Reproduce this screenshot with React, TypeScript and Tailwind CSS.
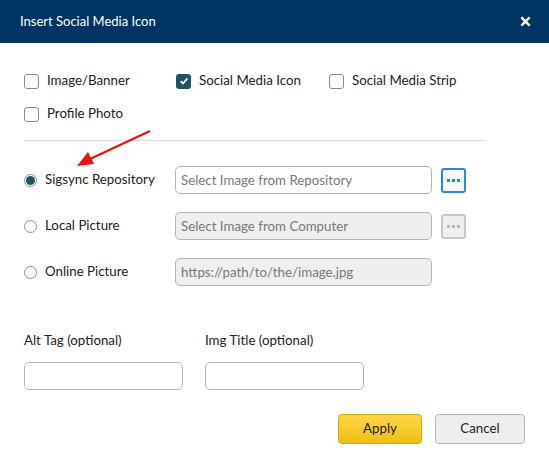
import { useState } from "react";

const types = ["Image/Banner", "Social Media Icon", "Social Media Strip", "Profile Photo"];

const sources = [
  { label: "Sigsync Repository", placeholder: "Select Image from Repository", enabled: true, browse: true },
  { label: "Local Picture", placeholder: "Select Image from Computer", enabled: false, browse: true },
  { label: "Online Picture", placeholder: "https://path/to/the/image.jpg", enabled: false, browse: false },
];

function Checkbox({ checked }: { checked: boolean }) {
  return checked ? (
    <span className="grid h-[15px] w-[15px] place-items-center rounded-[3px] bg-[#1d545e]">
      <svg viewBox="0 0 12 12" className="h-[10px] w-[10px]">
        <path d="M2 6.3 L4.8 9 L10 3" fill="none" stroke="white" strokeWidth="2.2" />
      </svg>
    </span>
  ) : (
    <span className="h-[15px] w-[15px] rounded-[3px] border border-[#8a8a8a] bg-white" />
  );
}

function Radio({ checked }: { checked: boolean }) {
  return (
    <span className="grid h-[13px] w-[13px] place-items-center rounded-full border border-[#8f8f8f] bg-white">
      {checked ? <span className="h-[9px] w-[9px] rounded-full bg-[#1d545e]" /> : null}
    </span>
  );
}

function Dots({ active }: { active: boolean }) {
  const dot = active ? "bg-[#2a86d6]" : "bg-[#b8b8b8]";
  return (
    <button
      type="button"
      className={`flex h-[25px] w-[25px] items-center justify-center gap-[2px] rounded-[3px] border-2 ${
        active ? "border-[#2d88d8] bg-[#f4f6f8]" : "border-[#c8c8c8] bg-[#efefef]"
      }`}
    >
      <span className={`h-[3px] w-[3px] ${dot}`} />
      <span className={`h-[3px] w-[3px] ${dot}`} />
      <span className={`h-[3px] w-[3px] ${dot}`} />
    </button>
  );
}

export default function App() {
  const [source] = useState(0);

  return (
    <div className="relative h-[470px] w-[549px] bg-white font-['Lato','Open_Sans',sans-serif] text-[13.3px] text-[#222]">
      <header className="flex h-[43px] items-center justify-between bg-[#003462] pl-[20px] pr-[18px]">
        <h1 className="text-[13px] text-white">Insert Social Media Icon</h1>
        <svg viewBox="0 0 12 12" className="h-[11px] w-[11px]">
          <path d="M1.5 1.5 L10.5 10.5 M10.5 1.5 L1.5 10.5" stroke="white" strokeWidth="2.6" />
        </svg>
      </header>

      <div className="px-[24px] pt-[29px]">
        <div className="grid grid-cols-[152px_153px_1fr] gap-y-[15px]">
          {types.map((t) => (
            <label key={t} className="flex h-[18px] items-center gap-[8px]">
              <Checkbox checked={t === "Social Media Icon"} />
              <span>{t}</span>
            </label>
          ))}
        </div>

        <div className="mt-[17px] w-[461px] border-t border-[#dcdcdc]" />

        <div className="mt-[25px] flex flex-col gap-[18px]">
          {sources.map((s, i) => (
            <div key={s.label} className="flex items-center">
              <label className="flex w-[151px] items-center gap-[8px]">
                <Radio checked={i === source} />
                <span>{s.label}</span>
              </label>
              <input
                disabled={!s.enabled}
                placeholder={s.placeholder}
                className={`h-[28px] w-[257px] rounded-[5px] border border-[#b4b4b4] px-[5px] text-[13.3px] placeholder:text-[#777] outline-none ${
                  s.enabled ? "bg-white" : "bg-[#efefef]"
                }`}
              />
              {s.browse ? (
                <div className="ml-[9px]">
                  <Dots active={s.enabled} />
                </div>
              ) : null}
            </div>
          ))}
        </div>

        <div className="mt-[45px] flex gap-[22px]">
          <div className="flex flex-col gap-[11px]">
            <span>Alt Tag (optional)</span>
            <input className="h-[28px] w-[159px] rounded-[5px] border border-[#b4b4b4] outline-none" />
          </div>
          <div className="flex flex-col gap-[11px]">
            <span>Img Title (optional)</span>
            <input className="h-[28px] w-[159px] rounded-[5px] border border-[#b4b4b4] outline-none" />
          </div>
        </div>

        <div className="mt-[24px] flex justify-end gap-[13px]">
          <button
            type="button"
            className="h-[30px] w-[84px] rounded-[4px] border border-[#d4a90d] bg-gradient-to-b from-[#fdd543] to-[#efbf12] text-[13.3px]"
          >
            Apply
          </button>
          <button
            type="button"
            className="h-[30px] w-[90px] rounded-[4px] border border-[#b4b4b4] bg-[#eeeeee] text-[13.3px]"
          >
            Cancel
          </button>
        </div>
      </div>

      <svg className="pointer-events-none absolute left-0 top-0" width="549" height="470">
        <line x1="150" y1="131" x2="90" y2="159" stroke="#e3170f" strokeWidth="2.4" />
        <polygon points="77,166 88,152 94,164" fill="#e3170f" />
      </svg>
    </div>
  );
}
